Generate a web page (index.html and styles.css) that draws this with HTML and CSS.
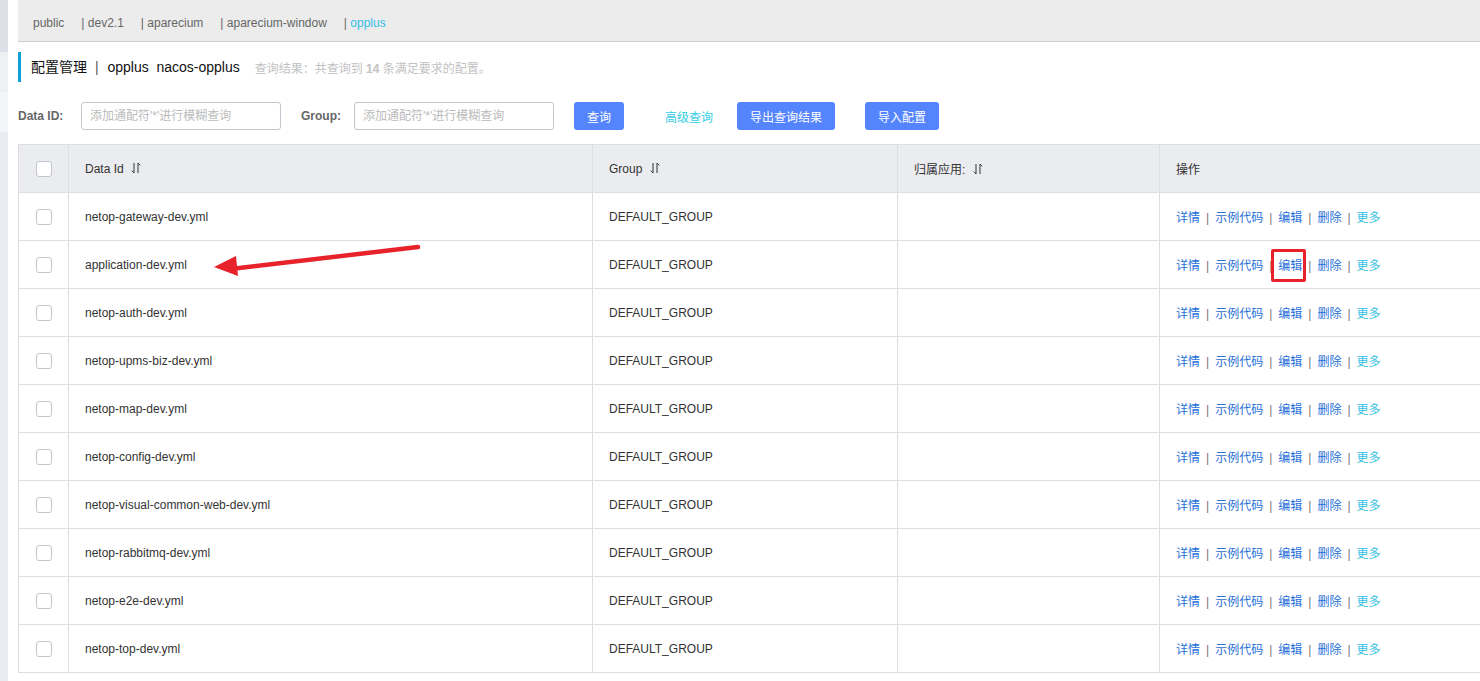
FILE: index.html
```html
<!DOCTYPE html>
<html lang="zh">
<head>
<meta charset="utf-8">
<link rel="stylesheet" href="styles.css">
</head>
<body>
<div class="page">
  <aside class="side">
    <div class="s1"></div><div class="s2"></div><div class="s3"></div><div class="s4"></div>
  </aside>
  <main class="main">
    <div class="ns-bar">
      <span class="ns">public</span>
      <span class="ns">| dev2.1</span>
      <span class="ns">| aparecium</span>
      <span class="ns">| aparecium-window</span>
      <span class="ns active"><span class="bar-sep">|</span> opplus</span>
    </div>
    <div class="title-row">
      <div class="title">配置管理 <span class="tsep">|</span> opplus&nbsp; nacos-opplus</div>
      <div class="result">查询结果：共查询到 <b>14</b> 条满足要求的配置。</div>
    </div>
    <div class="search-row">
      <label class="lbl">Data ID:</label>
      <div class="input">添加通配符'*'进行模糊查询</div>
      <label class="lbl lbl-group">Group:</label>
      <div class="input">添加通配符'*'进行模糊查询</div>
      <button class="btn btn-query">查询</button>
      <a class="adv">高级查询</a>
      <button class="btn btn-export">导出查询结果</button>
      <button class="btn btn-import">导入配置</button>
    </div>
    <div class="table-wrap">
      <table class="tbl">
        <colgroup>
          <col class="c-chk"><col class="c-id"><col class="c-group"><col class="c-app"><col class="c-op">
        </colgroup>
        <thead>
          <tr>
            <th><span class="chk"></span></th>
            <th>Data Id <svg class="sort" viewBox="0 0 10 12" width="10" height="12"><path d="M3 1V11M3 11L0.8 8.6M7 11V1M7 1L9.2 3.4" fill="none" stroke="#333" stroke-width="1"/></svg></th>
            <th>Group <svg class="sort" viewBox="0 0 10 12" width="10" height="12"><path d="M3 1V11M3 11L0.8 8.6M7 11V1M7 1L9.2 3.4" fill="none" stroke="#333" stroke-width="1"/></svg></th>
            <th>归属应用: <svg class="sort" viewBox="0 0 10 12" width="10" height="12"><path d="M3 1V11M3 11L0.8 8.6M7 11V1M7 1L9.2 3.4" fill="none" stroke="#333" stroke-width="1"/></svg></th>
            <th>操作</th>
          </tr>
        </thead>
        <tbody>
          <tr><td><span class="chk"></span></td><td>netop-gateway-dev.yml</td><td>DEFAULT_GROUP</td><td></td><td class="ops"><a>详情</a><i>|</i><a>示例代码</a><i>|</i><a>编辑</a><i>|</i><a>删除</a><i>|</i><a class="more">更多</a></td></tr>
          <tr><td><span class="chk"></span></td><td class="arrow-cell">application-dev.yml<svg class="arrow" width="230" height="42" viewBox="0 0 230 42"><path d="M217 6L30 28" stroke="#e8222a" stroke-width="4.5" stroke-linecap="round"/><path d="M13 26L35 15L37 35Z" fill="#e8222a"/></svg></td><td>DEFAULT_GROUP</td><td></td><td class="ops"><a>详情</a><i>|</i><a>示例代码</a><i>|</i><a class="boxed">编辑</a><i>|</i><a>删除</a><i>|</i><a class="more">更多</a></td></tr>
          <tr><td><span class="chk"></span></td><td>netop-auth-dev.yml</td><td>DEFAULT_GROUP</td><td></td><td class="ops"><a>详情</a><i>|</i><a>示例代码</a><i>|</i><a>编辑</a><i>|</i><a>删除</a><i>|</i><a class="more">更多</a></td></tr>
          <tr><td><span class="chk"></span></td><td>netop-upms-biz-dev.yml</td><td>DEFAULT_GROUP</td><td></td><td class="ops"><a>详情</a><i>|</i><a>示例代码</a><i>|</i><a>编辑</a><i>|</i><a>删除</a><i>|</i><a class="more">更多</a></td></tr>
          <tr><td><span class="chk"></span></td><td>netop-map-dev.yml</td><td>DEFAULT_GROUP</td><td></td><td class="ops"><a>详情</a><i>|</i><a>示例代码</a><i>|</i><a>编辑</a><i>|</i><a>删除</a><i>|</i><a class="more">更多</a></td></tr>
          <tr><td><span class="chk"></span></td><td>netop-config-dev.yml</td><td>DEFAULT_GROUP</td><td></td><td class="ops"><a>详情</a><i>|</i><a>示例代码</a><i>|</i><a>编辑</a><i>|</i><a>删除</a><i>|</i><a class="more">更多</a></td></tr>
          <tr><td><span class="chk"></span></td><td>netop-visual-common-web-dev.yml</td><td>DEFAULT_GROUP</td><td></td><td class="ops"><a>详情</a><i>|</i><a>示例代码</a><i>|</i><a>编辑</a><i>|</i><a>删除</a><i>|</i><a class="more">更多</a></td></tr>
          <tr><td><span class="chk"></span></td><td>netop-rabbitmq-dev.yml</td><td>DEFAULT_GROUP</td><td></td><td class="ops"><a>详情</a><i>|</i><a>示例代码</a><i>|</i><a>编辑</a><i>|</i><a>删除</a><i>|</i><a class="more">更多</a></td></tr>
          <tr><td><span class="chk"></span></td><td>netop-e2e-dev.yml</td><td>DEFAULT_GROUP</td><td></td><td class="ops"><a>详情</a><i>|</i><a>示例代码</a><i>|</i><a>编辑</a><i>|</i><a>删除</a><i>|</i><a class="more">更多</a></td></tr>
          <tr><td><span class="chk"></span></td><td>netop-top-dev.yml</td><td>DEFAULT_GROUP</td><td></td><td class="ops"><a>详情</a><i>|</i><a>示例代码</a><i>|</i><a>编辑</a><i>|</i><a>删除</a><i>|</i><a class="more">更多</a></td></tr>
        </tbody>
      </table>
    </div>
  </main>
</div>
</body>
</html>
```
FILE: styles.css
```css
html, body {
  margin: 0;
  padding: 0;
  overflow: hidden;
  background: #fff;
}
body {
  font-family: "Liberation Sans", "Noto Sans CJK SC", sans-serif;
  font-size: 12px;
  color: #333;
}
.page {
  display: flex;
  width: 1600px;
  height: 681px;
}
.side {
  width: 8px;
  flex: none;
  display: flex;
  flex-direction: column;
}
.s1 { height: 52px; background: #dde0e6; }
.s2 { height: 40px; background: #eef0f3; }
.s3 { height: 40px; background: #f4f5f8; }
.s4 { flex: 1; background: #e9ecf0; }
.main {
  flex: 1;
  padding-left: 10px;
  display: flex;
  flex-direction: column;
}
.ns-bar {
  box-sizing: border-box;
  height: 42px;
  background: #ececec;
  border-bottom: 1px solid #cfcfcf;
  display: flex;
  align-items: center;
  padding: 5px 0 0 15px;
  gap: 17px;
  font-size: 12px;
  color: #666;
}
.ns.active { color: #33bde5; }
.bar-sep { color: #666; }
.title-row {
  display: flex;
  align-items: center;
  margin-top: 10px;
  height: 30px;
}
.title {
  border-left: 3px solid #0ba0d8;
  padding-left: 10px;
  height: 30px;
  line-height: 30px;
  font-size: 14px;
  color: #111;
}
.tsep { color: #555; margin: 0 5px 0 4px; }
.result {
  margin-left: 15px;
  color: #c2c2c2;
  font-size: 12px;
}
.result b { font-weight: bold; }
.search-row {
  display: flex;
  align-items: center;
  margin-top: 20px;
  height: 28px;
}
.lbl {
  font-weight: bold;
  color: #666;
  font-size: 12px;
  width: 63px;
}
.lbl-group {
  margin-left: 20px;
  width: 53px;
}
.input {
  box-sizing: border-box;
  width: 200px;
  height: 28px;
  border: 1px solid #c4c6cf;
  border-radius: 3px;
  padding-left: 8px;
  line-height: 26px;
  color: #bbb;
  font-size: 12px;
}
.btn {
  height: 28px;
  border: none;
  border-radius: 3px;
  background: #5584ff;
  color: #fff;
  font-family: inherit;
  font-size: 12px;
  padding: 0;
}
.btn-query { margin-left: 20px; width: 50px; }
.adv { margin-left: 41px; color: #33cde5; width: 72px; }
.btn-export { width: 98px; }
.btn-import { margin-left: 30px; width: 74px; }
.table-wrap {
  margin-top: 14px;
}
.tbl {
  border-collapse: collapse;
  table-layout: fixed;
  width: 1520px;
  border-left: 1px solid #dcdee3;
}
.c-chk { width: 50px; }
.c-id { width: 524px; }
.c-group { width: 305px; }
.c-app { width: 262px; }
.c-op { width: 379px; }
.tbl th, .tbl td {
  height: 47px;
  border: 1px solid #dcdee3;
  border-left: none;
  text-align: left;
  padding: 0 0 0 16px;
  font-weight: normal;
  color: #333;
  font-size: 12px;
}
.tbl th {
  background: #ebecf0;
}
.tbl th:first-child, .tbl td:first-child {
  padding: 0;
  text-align: center;
}
.chk {
  display: inline-block;
  width: 14px;
  height: 14px;
  border: 1px solid #c4c6cf;
  border-radius: 3px;
  background: #fff;
  vertical-align: middle;
}
.sort { vertical-align: -1px; margin-left: 4px; }
.ops a { color: #1f6fd8; }
.ops a.more { color: #33c0e5; }
.ops i { font-style: normal; color: #777; margin: 0 6px; }
.arrow-cell { position: relative; }
.arrow {
  position: absolute;
  left: 132px;
  top: 0;
}
.boxed {
  position: relative;
}
.boxed::after {
  content: "";
  position: absolute;
  left: -7px;
  top: -10px;
  width: 29px;
  height: 27px;
  border: 3px solid #e8222a;
  border-radius: 2px;
}
```
